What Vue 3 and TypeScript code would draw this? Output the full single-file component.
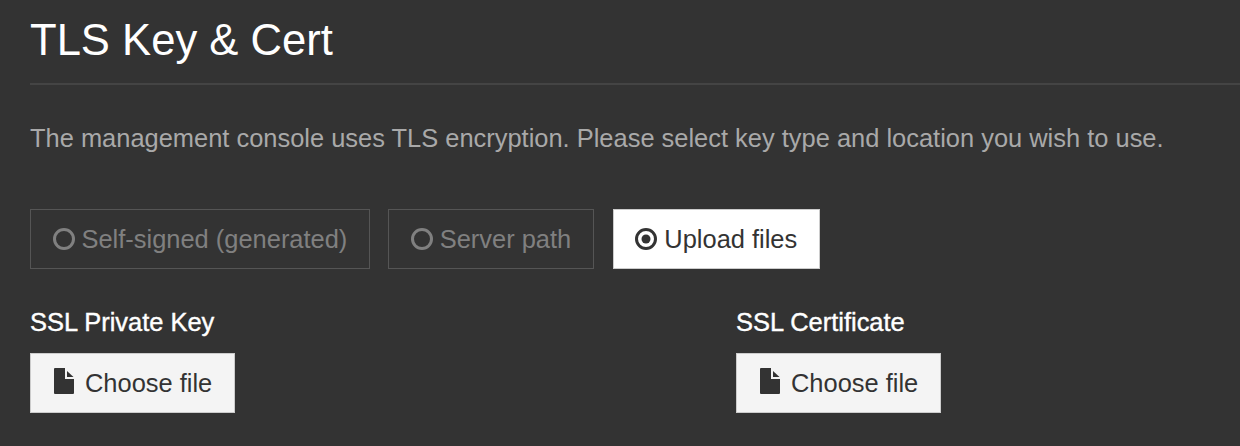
<script setup lang="ts">
interface Option { label: string; active: boolean }
const options: Option[] = [
  { label: 'Self-signed (generated)', active: false },
  { label: 'Server path', active: false },
  { label: 'Upload files', active: true },
]
const fields: string[] = ['SSL Private Key', 'SSL Certificate']
</script>

<template>
  <div class="page">
    <h1 class="title">TLS Key &amp; Cert</h1>
    <p class="intro">The management console uses TLS encryption. Please select key type and location you wish to use.</p>
    <div class="options">
      <button v-for="o in options" :key="o.label" class="option" :class="{ active: o.active }" type="button">
        <svg class="radio" viewBox="0 0 22 22" width="22" height="22" aria-hidden="true">
          <circle cx="11" cy="11" r="9.5" fill="none" stroke="currentColor" stroke-width="3" />
          <circle v-if="o.active" cx="11" cy="11" r="4.5" fill="currentColor" />
        </svg>
        <span>{{ o.label }}</span>
      </button>
    </div>
    <div class="fields">
      <div v-for="f in fields" :key="f" class="field">
        <label class="label">{{ f }}</label>
        <button class="file" type="button">
          <svg class="doc" viewBox="0 0 20 26" width="20" height="26" aria-hidden="true">
            <path d="M1 0H11V11H20V25A1 1 0 0 1 19 26H1A1 1 0 0 1 0 25V1A1 1 0 0 1 1 0Z" fill="currentColor" />
            <path d="M13 3L19.5 9H13Z" fill="currentColor" />
          </svg>
          <span>Choose file</span>
        </button>
      </div>
    </div>
  </div>
</template>

<style>
html, body { margin: 0; background: #333333; }
</style>

<style scoped>
.page {
  box-sizing: border-box;
  width: 1240px;
  height: 446px;
  padding-left: 30px;
  background: #333333;
  font-family: "Liberation Sans", Arial, sans-serif;
  overflow: hidden;
}
.title {
  margin: 0;
  height: 83px;
  border-bottom: 2px solid #444444;
  box-sizing: content-box;
  font-size: 43.6px;
  font-weight: 400;
  line-height: 80px;
  color: #ffffff;
}
.intro {
  margin: 38px 0 0;
  font-size: 25.45px;
  line-height: 30px;
  color: #a9a9a9;
  white-space: nowrap;
}
.options {
  display: flex;
  gap: 18.4px;
  margin-top: 56px;
}
.option {
  display: flex;
  align-items: center;
  gap: 7px;
  box-sizing: border-box;
  height: 60px;
  padding: 0 21.5px;
  border: 1px solid #555555;
  background: transparent;
  color: #808080;
  font: inherit;
  font-size: 25.45px;
}
.option.active {
  margin-left: 0.7px;
  background: #ffffff;
  border-color: #cccccc;
  color: #333333;
}
.fields {
  display: grid;
  grid-template-columns: 706px 1fr;
  margin-top: 38px;
}
.label {
  display: block;
  font-size: 25.45px;
  line-height: 30px;
  font-weight: 400;
  color: #ffffff;
  -webkit-text-stroke: 0.4px #ffffff;
}
.file {
  display: flex;
  align-items: center;
  gap: 11.5px;
  box-sizing: border-box;
  height: 60px;
  margin-top: 16px;
  padding: 0 21.5px 0 22.5px;
  border: 1px solid #cccccc;
  background: #f4f4f4;
  color: #333333;
  font: inherit;
  font-size: 25.45px;
}
.doc {
  margin-top: -4px;
}
</style>
